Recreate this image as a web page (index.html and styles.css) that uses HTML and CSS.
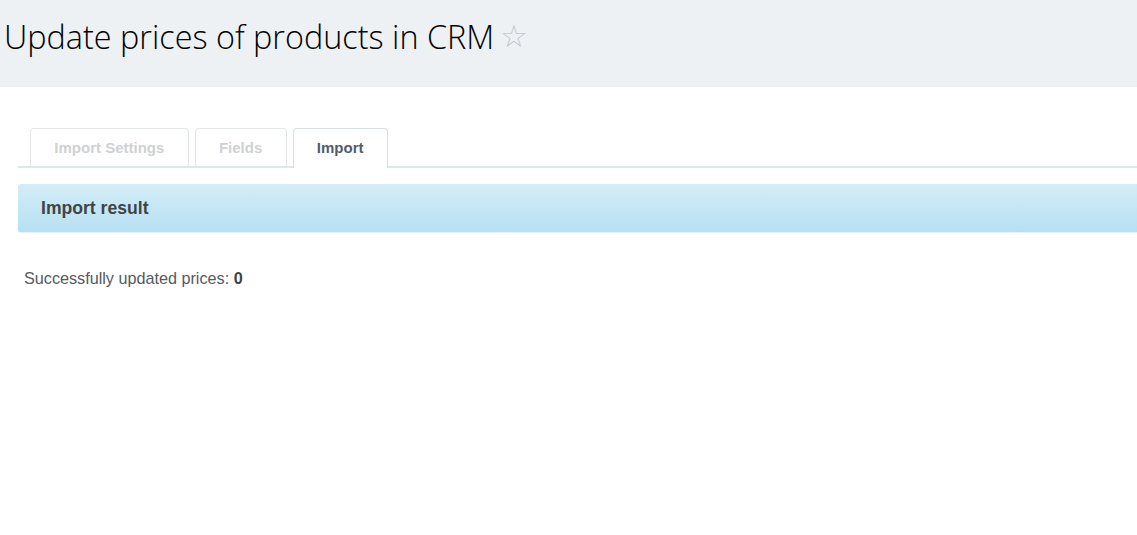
FILE: index.html
```html
<!DOCTYPE html>
<html>
<head>
<meta charset="utf-8">
<link rel="stylesheet" href="styles.css">
</head>
<body>
<header class="page-header">
  <h1 class="title">Update prices of products in CRM<span class="star">☆</span></h1>
</header>
<main class="content">
  <nav class="tabs">
    <div class="tab">Import Settings</div>
    <div class="tab">Fields</div>
    <div class="tab active">Import</div>
  </nav>
  <section class="result-bar">Import result</section>
  <p class="summary">Successfully updated prices: <b>0</b></p>
</main>
</body>
</html>
```
FILE: styles.css
```css
html, body {
  margin: 0;
  padding: 0;
  background: #fff;
}
body {
  font-family: "Liberation Sans", Arial, sans-serif;
}
.page-header {
  background: #eef1f4;
  height: 87px;
  box-sizing: border-box;
  padding: 16px 0 0 4px;
}
.title {
  margin: 0;
  font-family: "Open Sans", sans-serif;
  font-weight: 300;
  font-size: 32.4px;
  line-height: 40px;
  color: #000;
  display: flex;
  align-items: center;
}
.star {
  color: #c4c6c8;
  font-family: "DejaVu Sans", sans-serif;
  font-size: 31px;
  margin-left: 6px;
}
.content {
  padding: 41px 0 0 18px;
}
.tabs {
  display: flex;
  gap: 6px;
  padding-left: 12px;
  border-bottom: 2px solid #dde6e8;
  height: 38px;
  box-sizing: content-box;
}
.tab {
  height: 38px;
  box-sizing: border-box;
  border: 1px solid #e3e7e8;
  border-bottom: none;
  border-radius: 4px 4px 0 0;
  padding: 0 23.3px;
  font-weight: bold;
  font-size: 15px;
  line-height: 38px;
  color: #cfd1d3;
}
.tab.active {
  color: #535c69;
  border-color: #d6dfe1;
  height: 40px;
  background: #fff;
  position: relative;
  z-index: 1;
}
.result-bar {
  margin-top: 16px;
  height: 49px;
  box-sizing: border-box;
  border-radius: 3px 0 0 3px;
  background: linear-gradient(#d4edf7, #b6e0f2);
  border-bottom: 1px solid #e6f3f9;
  padding-left: 23px;
  font-weight: bold;
  font-size: 17.6px;
  line-height: 49px;
  color: #3f4447;
}
.summary {
  margin: 36px 0 0 6px;
  font-size: 16.2px;
  color: #545a60;
}
.summary b {
  color: #3f4447;
}
```
